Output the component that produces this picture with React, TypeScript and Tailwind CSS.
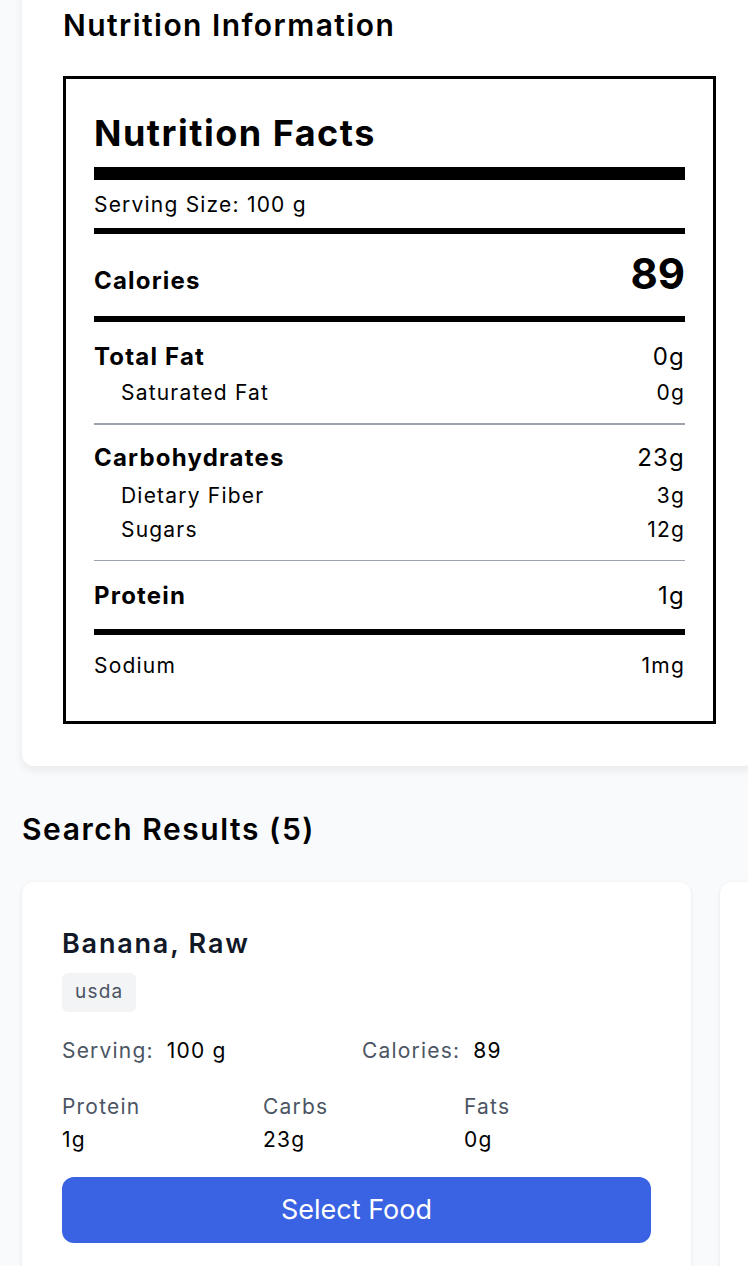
const facts = {
  serving: '100 g',
  calories: 89,
};

type Food = {
  name: string;
  source: string;
  serving: string;
  calories: number;
  protein: string;
  carbs: string;
  fats: string;
};

const results: Food[] = [
  { name: 'Banana, Raw', source: 'usda', serving: '100 g', calories: 89, protein: '1g', carbs: '23g', fats: '0g' },
  { name: 'Banana, Dried', source: 'usda', serving: '100 g', calories: 346, protein: '4g', carbs: '88g', fats: '2g' },
];

const Row = ({ label, value, bold, indent }: { label: string; value: string; bold?: boolean; indent?: boolean }) => (
  <div
    className={`flex justify-between ${
      bold ? 'text-[24px] leading-[32px] font-bold' : 'text-[21px] leading-[28px]'
    } ${indent ? 'pl-[27px]' : ''}`}
  >
    <span>{label}</span>
    <span className="font-normal">{value}</span>
  </div>
);

const FoodCard = ({ food }: { food: Food }) => (
  <div className="w-[669px] shrink-0 rounded-xl bg-white shadow-[0_1px_4px_rgba(0,0,0,0.08)] px-[40px] pt-[44px] pb-[40px]">
    <h3 className="text-[27px] leading-[36px] font-semibold tracking-[1.8px] text-[#111827]">{food.name}</h3>
    <span className="mt-[11px] inline-flex h-[39px] items-center rounded-md bg-[#f3f4f6] px-[13px] text-[19px] text-[#4b5563]">
      {food.source}
    </span>
    <div className="mt-[25px] grid grid-cols-2 gap-[11px] text-[21px] leading-[28px]">
      <div>
        <span className="text-[#4b5563]">Serving:</span>
        <span className="ml-[13px] text-black">{food.serving}</span>
      </div>
      <div>
        <span className="text-[#4b5563]">Calories:</span>
        <span className="ml-[13px] text-black">{food.calories}</span>
      </div>
    </div>
    <div className="mt-[28px] grid grid-cols-3 gap-[14px] text-[21px] leading-[28px]">
      {[
        ['Protein', food.protein],
        ['Carbs', food.carbs],
        ['Fats', food.fats],
      ].map(([label, value]) => (
        <div key={label}>
          <div className="text-[#4b5563]">{label}</div>
          <div className="mt-[5px] text-black">{value}</div>
        </div>
      ))}
    </div>
    <button className="mt-[23px] flex h-[66px] w-full items-center justify-center rounded-xl bg-[#3a63e3] text-[27px] tracking-normal text-white">
      Select Food
    </button>
  </div>
);

export default function App() {
  return (
    <div className="h-[1266px] w-[748px] overflow-hidden bg-[#f9fafb] font-['Inter',sans-serif] tracking-[1.2px] text-black">
      <div className="w-[1500px] pl-[22px]">
        {/* Nutrition card */}
        <section className="-mt-[40px] w-[734px] rounded-xl bg-white px-[41px] pt-[47px] pb-[42px] shadow-[0_4px_10px_rgba(0,0,0,0.07)]">
          <h2 className="text-[30px] leading-[36px] font-semibold tracking-[1.45px]">Nutrition Information</h2>
          <div className="mt-[33px] w-[653px] border-[3px] border-black px-[28px] pt-[34px] pb-[41px]">
            <h1 className="text-[36px] leading-[40px] font-bold tracking-[1.5px]">Nutrition Facts</h1>
            <div className="mt-[14px] h-[13px] bg-black" />
            <div className="mt-[11px] text-[21px] leading-[28px]">Serving Size: {facts.serving}</div>
            <div className="mt-[9px] h-[6px] bg-black" />
            <div className="flex items-baseline justify-between pt-[19px] pb-[17px]">
              <span className="text-[24px] font-bold">Calories</span>
              <span className="text-[42px] leading-[42px] font-bold tracking-normal">{facts.calories}</span>
            </div>
            <div className="h-[6px] bg-black" />

            <div className="mt-[19px]">
              <Row label="Total Fat" value="0g" bold />
              <div className="mt-[6px]">
                <Row label="Saturated Fat" value="0g" indent />
              </div>
            </div>
            <div className="mt-[16px] h-[1.5px] bg-[#9ca3af]" />

            <div className="mt-[17px]">
              <Row label="Carbohydrates" value="23g" bold />
              <div className="mt-[8px]">
                <Row label="Dietary Fiber" value="3g" indent />
              </div>
              <div className="mt-[6px]">
                <Row label="Sugars" value="12g" indent />
              </div>
            </div>
            <div className="mt-[16px] h-[1.5px] bg-[#9ca3af]" />

            <div className="mt-[19px]">
              <Row label="Protein" value="1g" bold />
            </div>
            <div className="mt-[17px] h-[6px] bg-black" />

            <div className="mt-[17px]">
              <Row label="Sodium" value="1mg" />
            </div>
          </div>
        </section>

        {/* Results */}
        <h2 className="mt-[45px] text-[30px] leading-[36px] font-semibold tracking-[1.55px]">
          Search Results ({results.length + 3})
        </h2>
        <div className="mt-[35px] flex gap-[29px]">
          {results.map((f) => (
            <FoodCard key={f.name} food={f} />
          ))}
        </div>
      </div>
    </div>
  );
}
